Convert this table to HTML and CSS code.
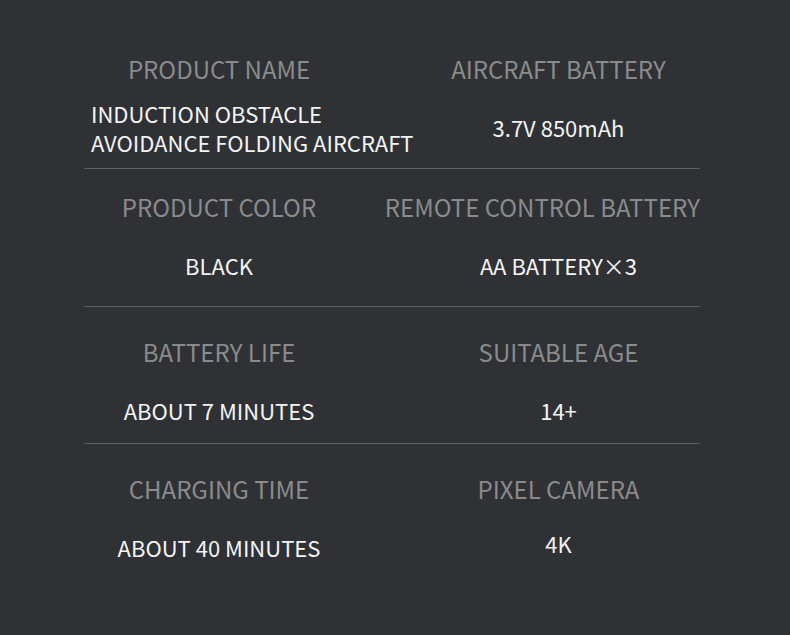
FILE: index.html
```html
<!DOCTYPE html>
<html lang="en">
<head>
<meta charset="utf-8">
<title>Specifications</title>
<link rel="stylesheet" href="styles.css">
</head>
<body>
<main class="specs">
  <section class="row">
    <div class="cell">
      <div class="label">PRODUCT NAME</div>
      <div class="value value--left"><span>INDUCTION OBSTACLE<br>AVOIDANCE FOLDING AIRCRAFT</span></div>
    </div>
    <div class="cell">
      <div class="label">AIRCRAFT BATTERY</div>
      <div class="value">3.7V 850mAh</div>
    </div>
  </section>
  <section class="row">
    <div class="cell">
      <div class="label">PRODUCT COLOR</div>
      <div class="value">BLACK</div>
    </div>
    <div class="cell">
      <div class="label label--wide">REMOTE CONTROL BATTERY</div>
      <div class="value">AA BATTERY×3</div>
    </div>
  </section>
  <section class="row row--low">
    <div class="cell">
      <div class="label">BATTERY LIFE</div>
      <div class="value">ABOUT 7 MINUTES</div>
    </div>
    <div class="cell">
      <div class="label">SUITABLE AGE</div>
      <div class="value">14+</div>
    </div>
  </section>
  <section class="row row--low row--last">
    <div class="cell">
      <div class="label">CHARGING TIME</div>
      <div class="value">ABOUT 40 MINUTES</div>
    </div>
    <div class="cell">
      <div class="label">PIXEL CAMERA</div>
      <div class="value value--up">4K</div>
    </div>
  </section>
</main>
</body>
</html>
```

FILE: styles.css
```css
html, body {
  margin: 0;
  padding: 0;
}
body {
  background: #2f3134;
  font-family: "Noto Sans CJK SC", "Noto Sans", sans-serif;
  width: 790px;
  height: 635px;
  overflow: hidden;
}
.specs {
  width: 616px;
  margin-left: 84px;
  padding-top: 31px;
}
.row {
  display: grid;
  grid-template-columns: 270px 283px;
  justify-content: space-between;
  height: 137px;
  border-bottom: 1px solid #5d5f62;
  box-sizing: content-box;
}
.row--low {
  height: 136px;
}
.row--last {
  border-bottom: none;
}
.cell {
  display: flex;
  flex-direction: column;
  align-items: stretch;
  padding-top: 23px;
}
.row--low .cell {
  padding-top: 30px;
}
.label {
  height: 30px;
  line-height: 30px;
  font-size: 24px;
  color: #8a8b8d;
  display: flex;
  justify-content: center;
  white-space: nowrap;
}
.label--wide {
  justify-content: flex-end;
}
.value {
  margin-top: 13px;
  height: 60px;
  display: flex;
  align-items: center;
  justify-content: center;
  font-size: 22px;
  line-height: 29px;
  color: #f4f4f4;
  white-space: nowrap;
}
.value--left {
  justify-content: flex-start;
  padding-left: 7px;
  padding-top: 1px;
  box-sizing: border-box;
  height: 61px;
}
.value--up {
  margin-top: 9px;
}
```
